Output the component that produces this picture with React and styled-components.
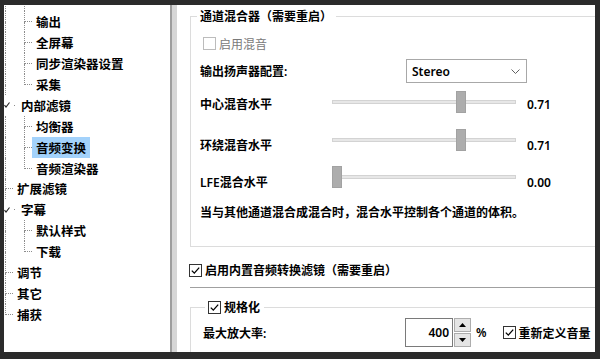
import React from "react";
import styled, { createGlobalStyle } from "styled-components";

const GlobalStyle = createGlobalStyle`
  html, body {
    margin: 0;
    padding: 0;
    background: #2b2b2b;
  }
`;

const FONT = `"Noto Sans", "Noto Sans CJK SC", sans-serif`;

const Frame = styled.div`
  width: 600px;
  height: 359px;
  box-sizing: border-box;
  padding: 5px 5px 7px 4px;
  background: #2b2b2b;
`;

const Window = styled.div`
  display: flex;
  height: 100%;
  overflow: hidden;
  font-family: ${FONT};
  color: #000;
`;

/* ---------- tree ---------- */

const Tree = styled.div`
  width: 166px;
  flex: none;
  background: #fff;
  overflow: hidden;
  font-size: 12.5px;
  font-weight: 600;
`;

const TreeList = styled.div`
  margin-top: -14.5px;
  display: flex;
  flex-direction: column;
`;

const Row = styled.div`
  display: flex;
  height: 20.9px;
  align-items: stretch;
`;

const Guide = styled.span`
  display: flex;
  flex-direction: column;
  flex: none;
  width: ${(p) => p.$w}px;
  margin-left: ${(p) => p.$ml || 0}px;
`;

const Half = styled.span`
  flex: 1 1 0;
  border-left: ${(p) => (p.$v ? "1px dotted #8c8c8c" : "1px solid transparent")};
  border-bottom: ${(p) => (p.$h ? "1px dotted #8c8c8c" : "none")};
`;

const Opener = styled.span`
  display: flex;
  align-items: center;
  flex: none;
  width: 13px;
  gap: 3px;
`;

const Dot = styled.span`
  width: 1px;
  height: 1px;
  background: #8c8c8c;
`;

const Label = styled.span`
  display: flex;
  align-items: center;
  padding: 0 4px;
  white-space: nowrap;
  background: ${(p) => (p.$sel ? "#a3d2fb" : "transparent")};
`;

const Splitter = styled.div`
  width: 7px;
  flex: none;
  box-sizing: border-box;
  border-left: 2px solid #9d9d9d;
  background: #d6d6d6;
`;

const lines = (type) => {
  if (type === "tee")
    return [
      <Half key="a" $v $h />,
      <Half key="b" $v />,
    ];
  if (type === "elbow")
    return [
      <Half key="a" $v $h />,
      <Half key="b" />,
    ];
  return [<Half key="a" $v />, <Half key="b" $v />];
};

const items = [
  { t: "DVD/OGM", lvl: 1, line: "tee" },
  { t: "输出", lvl: 1, line: "tee" },
  { t: "全屏幕", lvl: 1, line: "tee" },
  { t: "同步渲染器设置", lvl: 1, line: "tee" },
  { t: "采集", lvl: 1, line: "elbow" },
  { t: "内部滤镜", lvl: 0, open: true },
  { t: "均衡器", lvl: 1, line: "tee" },
  { t: "音频变换", lvl: 1, line: "tee", sel: true },
  { t: "音频渲染器", lvl: 1, line: "elbow" },
  { t: "扩展滤镜", lvl: 0, line: "tee" },
  { t: "字幕", lvl: 0, open: true },
  { t: "默认样式", lvl: 1, line: "tee" },
  { t: "下载", lvl: 1, line: "elbow" },
  { t: "调节", lvl: 0, line: "tee" },
  { t: "其它", lvl: 0, line: "tee" },
  { t: "捕获", lvl: 0, line: "elbow" },
];

const TreeRow = ({ item }) => (
  <Row>
    {item.lvl === 0 && item.open && (
      <Opener>
        <svg width="7" height="8" viewBox="0 0 7 8">
          <path d="M0.5 4.2 L2 6.2 L5.5 1.5" fill="none" stroke="#222" strokeWidth="1.1" />
        </svg>
        <Dot />
      </Opener>
    )}
    {item.lvl === 0 && !item.open && (
      <Guide $w={8} $ml={1}>
        {lines(item.line)}
      </Guide>
    )}
    {item.lvl === 1 && (
      <>
        <Guide $w={19} $ml={1}>
          {lines("pass")}
        </Guide>
        <Guide $w={8}>{lines(item.line)}</Guide>
      </>
    )}
    <Label $sel={item.sel}>{item.t}</Label>
  </Row>
);

/* ---------- settings page ---------- */

const Page = styled.div`
  flex: 1;
  min-width: 0;
  background: #fff;
  overflow: hidden;
  padding: 2.5px 0 0 13px;
  font-size: 12px;
  font-weight: 600;
`;

const Group = styled.fieldset`
  margin: ${(p) => p.$mt || 0}px -20px 0 0;
  padding: 0 0 ${(p) => p.$pb || 0}px ${(p) => p.$pl}px;
  border: 1px solid #dcdcdc;
  min-width: 0;
`;

const Legend = styled.legend`
  margin-left: ${(p) => p.$ml}px;
  padding: 0 4px 0 3px;
  line-height: 17px;
  display: flex;
  align-items: center;
  gap: 3px;
`;

const CheckRow = styled.div`
  display: flex;
  align-items: center;
  gap: 3px;
  height: 17px;
  margin-top: ${(p) => p.$mt || 0}px;
  margin-left: ${(p) => p.$ml || 0}px;
  color: ${(p) => (p.$disabled ? "#7a7a7a" : "#000")};
  font-weight: ${(p) => (p.$disabled ? 400 : 600)};
`;

const Box = styled.span`
  width: 13px;
  height: 13px;
  flex: none;
  box-sizing: border-box;
  border: 1px solid ${(p) => (p.$disabled ? "#bcbcbc" : "#333")};
  background: #fff;
  display: flex;
  align-items: center;
  justify-content: center;
`;

const Check = ({ checked, disabled }) => (
  <Box $disabled={disabled}>
    {checked && (
      <svg width="11" height="11" viewBox="0 0 11 11">
        <path d="M1.8 5.6 L4.3 8.1 L9.2 2.6" fill="none" stroke="#000" strokeWidth="1.3" />
      </svg>
    )}
  </Box>
);

const Field = styled.div`
  display: flex;
  align-items: center;
  height: ${(p) => (p.$h ? `${p.$h}px` : "auto")};
  margin-top: ${(p) => p.$mt || 0}px;
`;

const FieldLabel = styled.span`
  width: ${(p) => p.$w}px;
  flex: none;
  white-space: nowrap;
  margin-top: ${(p) => (p.$shift || 0) * 2}px;
`;

const Combo = styled.div`
  width: 121px;
  height: 24px;
  box-sizing: border-box;
  border: 1px solid #a8a8a8;
  display: flex;
  align-items: center;
  justify-content: space-between;
  padding: 0 6px 0 5px;
`;

const Track = styled.div`
  position: relative;
  width: 184px;
  height: 22px;
  flex: none;
  display: flex;
  align-items: center;
`;

const Rail = styled.div`
  width: 100%;
  height: 4px;
  box-sizing: border-box;
  background: #e7e7e7;
  border: 1px solid #d3d3d3;
`;

const Thumb = styled.div`
  position: absolute;
  top: 0;
  width: 10px;
  height: 22px;
  box-sizing: border-box;
  background: #adadad;
  border: 1px solid #a2a2a2;
`;

const Value = styled.span`
  margin-left: 11px;
  margin-top: ${(p) => (p.$shift || 0) * 2}px;
`;

const Note = styled.div`
  margin-top: 15.5px;
  line-height: 17px;
  white-space: nowrap;
`;

const Rule = styled.div`
  height: 1px;
  background: #a0a0a0;
  margin: 8.5px -20px 0 0;
`;

const SpinWrap = styled.div`
  display: flex;
  flex: none;
`;

const SpinInput = styled.div`
  width: 48px;
  height: 29px;
  box-sizing: border-box;
  border: 1px solid #7a7a7a;
  display: flex;
  align-items: center;
  justify-content: flex-end;
  padding-right: 3px;
`;

const SpinButtons = styled.div`
  display: flex;
  flex-direction: column;
  width: 17px;
  height: 29px;
  gap: 1px;
  margin-left: 1px;
`;

const SpinBtn = styled.div`
  flex: 1;
  box-sizing: border-box;
  border: 1px solid #adadad;
  background: #e5e5e5;
  display: flex;
  align-items: center;
  justify-content: center;
`;

const Unit = styled.span`
  margin-left: 5px;
  margin-right: 16px;
`;

const SliderGap = styled.div`
  height: ${(p) => p.$h}px;
`;

const Slider = ({ label, value, shift }) => (
  <Field $h={22}>
    <FieldLabel $w={132} $shift={shift}>
      {label}
    </FieldLabel>
    <Track>
      <Rail />
      <Thumb style={{ left: `${value * 174}px` }} />
    </Track>
    <Value $shift={shift}>{value.toFixed(2)}</Value>
  </Field>
);

export default function App() {
  return (
    <>
      <GlobalStyle />
      <Frame>
        <Window>
          <Tree>
            <TreeList>
              {items.map((it) => (
                <TreeRow key={it.t} item={it} />
              ))}
            </TreeList>
          </Tree>
          <Splitter />
          <Page>
            <Group $pl={9} $pb={25.5}>
              <Legend $ml={-3}>通道混合器（需要重启）</Legend>
              <CheckRow $mt={10.5} $ml={3} $disabled>
                <Check disabled />
                启用混音
              </CheckRow>
              <Field $mt={7}>
                <FieldLabel $w={206}>输出扬声器配置:</FieldLabel>
                <Combo>
                  Stereo
                  <svg width="9" height="5" viewBox="0 0 9 5">
                    <path d="M0.5 0.5 L4.5 4.5 L8.5 0.5" fill="none" stroke="#606060" />
                  </svg>
                </Combo>
              </Field>
              <SliderGap $h={8} />
              <Slider label="中心混音水平" value={0.71} shift={2} />
              <SliderGap $h={16} />
              <Slider label="环绕混音水平" value={0.71} shift={5} />
              <SliderGap $h={15} />
              <Slider label="LFE混合水平" value={0} shift={5} />
              <Note>当与其他通道混合成混合时，混合水平控制各个通道的体积。</Note>
            </Group>
            <CheckRow $mt={14.5} $ml={-1}>
              <Check checked />
              启用内置音频转换滤镜（需要重启）
            </CheckRow>
            <Rule />
            <Group $pl={12} $pb={20} $mt={10.5}>
              <Legend $ml={2}>
                <Check checked />
                规格化
              </Legend>
              <Field $mt={2.5}>
                <FieldLabel $w={202}>最大放大率:</FieldLabel>
                <SpinWrap>
                  <SpinInput>400</SpinInput>
                  <SpinButtons>
                    <SpinBtn>
                      <svg width="7" height="4" viewBox="0 0 7 4">
                        <path d="M0 4 L3.5 0 L7 4 Z" fill="#000" />
                      </svg>
                    </SpinBtn>
                    <SpinBtn>
                      <svg width="7" height="4" viewBox="0 0 7 4">
                        <path d="M0 0 L3.5 4 L7 0 Z" fill="#000" />
                      </svg>
                    </SpinBtn>
                  </SpinButtons>
                </SpinWrap>
                <Unit>%</Unit>
                <CheckRow>
                  <Check checked />
                  重新定义音量
                </CheckRow>
              </Field>
            </Group>
          </Page>
        </Window>
      </Frame>
    </>
  );
}
